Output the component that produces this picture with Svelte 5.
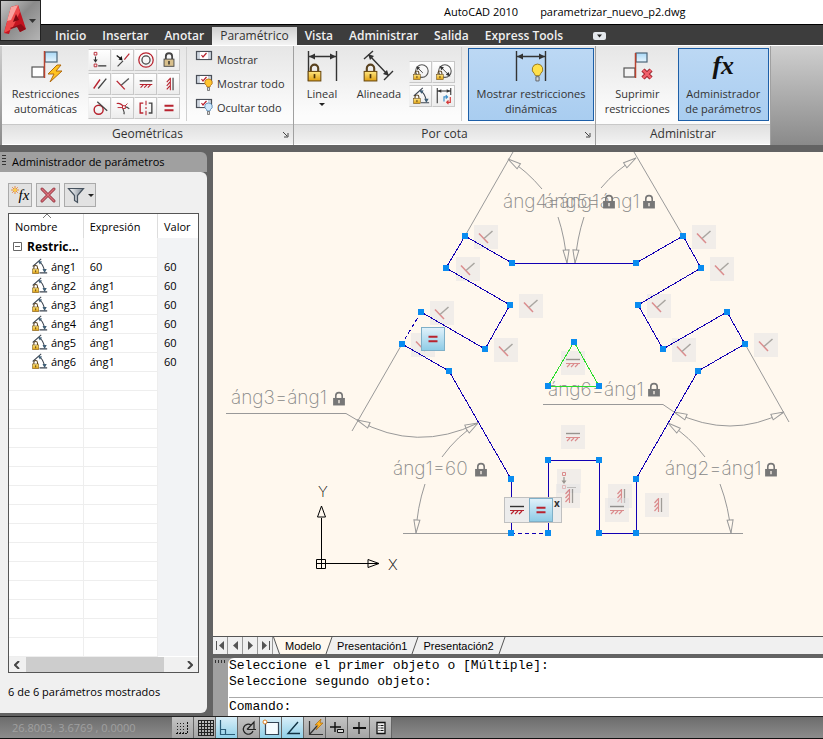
<script lang="ts">
  type Point = [number, number];

  const menu = ['Inicio', 'Insertar', 'Anotar', 'Paramétrico', 'Vista', 'Administrar', 'Salida', 'Express Tools'];
  let activeMenu = 'Paramétrico';

  const geometric = [
    { icon: 'coincident', label: 'Coincidente' },
    { icon: 'collinear', label: 'Colineal' },
    { icon: 'concentric', label: 'Concéntrico' },
    { icon: 'fix', label: 'Fijo' },
    { icon: 'parallel', label: 'Paralelo' },
    { icon: 'perpendicular', label: 'Perpendicular' },
    { icon: 'horizontal', label: 'Horizontal' },
    { icon: 'vertical', label: 'Vertical' },
    { icon: 'tangent', label: 'Tangente' },
    { icon: 'smooth', label: 'Suave' },
    { icon: 'symmetric', label: 'Simetría' },
    { icon: 'equal', label: 'Igual' },
  ];

  const showOptions = [
    { icon: 'show', label: 'Mostrar' },
    { icon: 'show-all', label: 'Mostrar todo' },
    { icon: 'hide-all', label: 'Ocultar todo' },
  ];

  const dimensional = [
    { icon: 'radial', label: 'Radio' },
    { icon: 'diametral', label: 'Diámetro' },
    { icon: 'angular', label: 'Angular' },
    { icon: 'convert', label: 'Convertir' },
  ];

  const params = [
    { name: 'áng1', expression: '60', value: 60 },
    { name: 'áng2', expression: 'áng1', value: 60 },
    { name: 'áng3', expression: 'áng1', value: 60 },
    { name: 'áng4', expression: 'áng1', value: 60 },
    { name: 'áng5', expression: 'áng1', value: 60 },
    { name: 'áng6', expression: 'áng1', value: 60 },
  ];
  const emptyRows = Array(15);

  const statusButtons = [
    { icon: 'snap', label: 'Forzcursor', on: false },
    { icon: 'grid', label: 'Rejilla', on: false },
    { icon: 'ortho', label: 'Orto', on: true },
    { icon: 'polar', label: 'Polar', on: false },
    { icon: 'osnap', label: 'Refent', on: true },
    { icon: 'otrack', label: 'Rastreo', on: true },
    { icon: 'ducs', label: 'SCPD', on: false },
    { icon: 'dyn', label: 'Din', on: false },
    { icon: 'lineweight', label: 'Grosor', on: false },
    { icon: 'quickprops', label: 'Propiedades', on: false },
  ];

  // polyline vertices, clockwise from the bottom left of the slot
  const grips: Point[] = [
    [548, 533], [548, 460], [599, 460], [599, 533], [636, 533], [636, 479],
    [698, 371], [745, 344], [727, 312], [663, 349], [638, 305], [701, 268],
    [683, 236], [636, 263], [512, 263], [465, 236], [446, 268], [510, 305],
    [485, 349], [421, 312], [402, 344], [449, 371], [511, 479], [511, 533],
  ];
  const triangle: Point[] = [[574, 342], [548, 386], [599, 386]];

  const toPoints = (pts: Point[]) => pts.map((p) => p.join(',')).join(' ');

  const badges = [
    { icon: 'perpendicular', x: 486, y: 237 },
    { icon: 'perpendicular', x: 468, y: 269 },
    { icon: 'perpendicular', x: 531, y: 306 },
    { icon: 'perpendicular', x: 442, y: 313 },
    { icon: 'perpendicular', x: 423, y: 345 },
    { icon: 'perpendicular', x: 506, y: 350 },
    { icon: 'perpendicular', x: 704, y: 237 },
    { icon: 'perpendicular', x: 722, y: 269 },
    { icon: 'perpendicular', x: 659, y: 306 },
    { icon: 'perpendicular', x: 684, y: 350 },
    { icon: 'perpendicular', x: 766, y: 345 },
    { icon: 'horizontal', x: 573, y: 363 },
    { icon: 'horizontal', x: 573, y: 437 },
    { icon: 'coincident', x: 569, y: 481 },
    { icon: 'vertical', x: 568, y: 496 },
    { icon: 'vertical', x: 620, y: 496 },
    { icon: 'horizontal', x: 617, y: 510 },
    { icon: 'vertical', x: 657, y: 505 },
  ];

  // angle is the direction the tip points to, 0 = right
  const arrows = [
    { x: 508, y: 159, angle: -146 },
    { x: 567, y: 263, angle: 86 },
    { x: 575, y: 263, angle: 94 },
    { x: 636, y: 158, angle: -34 },
    { x: 357, y: 420, angle: -156 },
    { x: 478, y: 423, angle: -22 },
    { x: 478, y: 423, angle: -36 },
    { x: 416, y: 533, angle: 94 },
    { x: 668, y: 423, angle: -144 },
    { x: 674, y: 412, angle: -157 },
    { x: 784, y: 412, angle: -23 },
    { x: 731, y: 533, angle: 86 },
  ];

  const dimensions = [
    { text: 'áng4=áng1', x: 503, y: 208 },
    { text: 'áng5=áng1', x: 544, y: 208 },
    { text: 'áng3=áng1', x: 231, y: 404 },
    { text: 'áng6=áng1', x: 548, y: 396 },
    { text: 'áng1=60', x: 393, y: 475 },
    { text: 'áng2=áng1', x: 665, y: 475 },
  ];
  const locks: Point[] = [[602, 194], [642, 194], [332, 391], [647, 382], [474, 462], [764, 462]];
</script>

<svg class="defs" aria-hidden="true">
  <defs>
    <linearGradient id="gold" x1="0" y1="0" x2="0" y2="1">
      <stop offset="0" stop-color="#ffe680" />
      <stop offset="1" stop-color="#e0a010" />
    </linearGradient>
    <linearGradient id="sky" x1="0" y1="0" x2="0" y2="1">
      <stop offset="0" stop-color="#a8d8f6" />
      <stop offset="1" stop-color="#e8f6ff" />
    </linearGradient>
    <linearGradient id="funnel-fill">
      <stop offset="0" stop-color="#fff" />
      <stop offset="1" stop-color="#7d8894" />
    </linearGradient>
  </defs>

  <symbol id="coincident" viewBox="0 0 20 20">
    <g fill="none">
      <path d="M3.500 1.500h3v3h-3z M3.500 14.500h3v3h-3z" stroke="#b8232f" />
      <path d="M5 6v5 M8 16.500h9" stroke="#333" stroke-width="1.200" />
    </g>
    <path d="M2.500 9.500h5L5 13z" fill="#333" />
  </symbol>
  <symbol id="collinear" viewBox="0 0 20 20">
    <path d="M4 17L10 11" stroke="#444" stroke-width="1.300" />
    <path d="M11.500 9.500L17 3" stroke="#b8232f" stroke-width="1.300" />
    <path d="M3 5l5 4" stroke="#111" stroke-width="1.400" />
    <path d="M9.500 10.500l-4.500-1 3.500-4z" fill="#111" />
  </symbol>
  <symbol id="concentric" viewBox="0 0 20 20">
    <circle cx="10" cy="10" r="8" fill="none" stroke="#b8232f" stroke-width="1.400" />
    <circle cx="10" cy="10" r="4.500" fill="none" stroke="#444" stroke-width="1.400" />
  </symbol>
  <symbol id="fix" viewBox="0 0 20 20">
    <path d="M6.500 9V6a3.500 3.500 0 0 1 7 0v3" fill="none" stroke="#444" stroke-width="2" />
    <rect x="4.500" y="9" width="11" height="8" fill="#d9c08c" stroke="#444" />
    <path d="M10 11v4" stroke="#222" stroke-width="1.500" />
  </symbol>
  <symbol id="parallel" viewBox="0 0 20 20">
    <path d="M3 15L10 5" stroke="#b8232f" stroke-width="1.500" />
    <path d="M8 15L17 4" stroke="#444" stroke-width="1.500" />
  </symbol>
  <symbol id="perpendicular" viewBox="0 0 20 20">
    <path d="M3 6.500L12 16" stroke="#b8232f" stroke-width="1.500" />
    <path d="M8 11.500L16.500 4" stroke="#555" stroke-width="1.500" />
  </symbol>
  <symbol id="horizontal" viewBox="0 0 20 20">
    <path d="M3 6.500h14" stroke="#333" stroke-width="1.400" />
    <path d="M3 10.500h14 M7 11l-3 3 M11 11l-3 3 M15 11l-3 3" fill="none" stroke="#b8232f" stroke-width="1.200" />
  </symbol>
  <symbol id="vertical" viewBox="0 0 20 20">
    <path d="M14.500 3v14" stroke="#444" stroke-width="1.300" />
    <path d="M11.500 3v14 M11 4l-3.500 4 M11 8l-3.500 4 M11 12l-3.500 4" fill="none" stroke="#b8232f" stroke-width="1.200" />
  </symbol>
  <symbol id="tangent" viewBox="0 0 20 20">
    <circle cx="8.500" cy="12" r="5" fill="none" stroke="#b8232f" stroke-width="1.600" />
    <path d="M7 3l11 10" stroke="#444" stroke-width="1.400" />
  </symbol>
  <symbol id="smooth" viewBox="0 0 20 20">
    <path d="M3 5c4-1 6 1 8 4" fill="none" stroke="#b8232f" stroke-width="1.300" />
    <path d="M11 9c3-1 5 1 6 2 M10 11c1 3 2 4 1 6" fill="none" stroke="#444" stroke-width="1.300" />
    <path d="M4 9.500h6 M12 8l3-3" stroke="#b8232f" />
    <rect x="9.500" y="7.500" width="3" height="3" fill="#fff" stroke="#b8232f" />
  </symbol>
  <symbol id="symmetric" viewBox="0 0 20 20">
    <path d="M7 4.500H3.500v11H7" fill="none" stroke="#b8232f" stroke-width="1.500" />
    <path d="M13 4.500h3.500v11H13" fill="none" stroke="#444" stroke-width="1.500" />
    <path d="M10 2v5 M10 9v2 M10 13v5" stroke="#b8232f" stroke-width="1.200" />
  </symbol>
  <symbol id="equal" viewBox="0 0 20 20">
    <path d="M5 7.500h10 M5 12.500h10" stroke="#b8232f" stroke-width="2.400" />
  </symbol>

  <symbol id="bulb" viewBox="0 0 12 18">
    <path d="M6 1a5 5 0 0 0-3 9l1 2h4l1-2a5 5 0 0 0-3-9z" fill="#ffe04a" stroke="#8a6a14" stroke-width="0.800" />
    <path d="M4.500 13h3v4h-3z" fill="#d0d6dc" stroke="#555" stroke-width="0.800" />
  </symbol>
  <symbol id="show" viewBox="0 0 18 18">
    <rect x="1.500" y="1.500" width="15" height="8" fill="#cfd6e0" stroke="#4a4f58" stroke-width="1.200" />
    <rect x="5" y="2" width="8" height="7" fill="#fff" />
    <path d="M6.500 5l1.500 2 3.500-4" fill="none" stroke="#b8232f" stroke-width="1.200" />
  </symbol>
  <symbol id="show-all" viewBox="0 0 18 18">
    <use href="#show" width="18" height="18" />
    <path d="M13.500 5a3.500 3.500 0 0 0-2 6.500l.5 1.500h3l.5-1.500a3.500 3.500 0 0 0-2-6.500z" fill="#ffc52e" stroke="#b06a10" stroke-width=".8" />
    <path d="M12.500 13.500h2v3h-2z" fill="#ddd" stroke="#555" stroke-width=".7" />
  </symbol>
  <symbol id="hide-all" viewBox="0 0 18 18">
    <use href="#show" width="18" height="18" />
    <path d="M13.500 5a3.500 3.500 0 0 0-2 6.500l.5 1.500h3l.5-1.500a3.500 3.500 0 0 0-2-6.500z" fill="#cfe8fb" stroke="#4a7fae" stroke-width=".8" />
    <path d="M12.500 13.500h2v3h-2z" fill="#ddd" stroke="#555" stroke-width=".7" />
  </symbol>

  <symbol id="gold-lock" viewBox="0 0 14 18">
    <path d="M3.500 8V5a3.500 3.500 0 0 1 7 0v3" fill="none" stroke="#5a4320" stroke-width="2" />
    <rect x="1" y="8" width="12" height="9" fill="url(#gold)" stroke="#6b4a10" />
    <path d="M7 10.500v4" stroke="#4a3208" stroke-width="1.600" />
  </symbol>
  <symbol id="auto" viewBox="0 0 32 32">
    <rect x="15" y="2" width="12" height="10" fill="url(#sky)" stroke="#4a6478" stroke-width="1.200" />
    <rect x="2" y="17" width="12" height="10" fill="#fff" stroke="#555" stroke-width="1.200" />
    <path d="M14.500 1v27" stroke="#b8422f" stroke-width="1.500" />
    <path d="M27 15l-9 9h6l-4 8 12-11h-6l5-6z" fill="#ffc21f" stroke="#b06a10" />
  </symbol>
  <symbol id="remove" viewBox="0 0 32 32">
    <rect x="15" y="3" width="11" height="9" fill="url(#sky)" stroke="#4a6478" stroke-width="1.200" />
    <rect x="3" y="18" width="11" height="9" fill="#f4f4f4" stroke="#555" stroke-width="1.200" />
    <path d="M14.500 3v25" stroke="#b8422f" stroke-width="1.500" />
    <path d="M22 20l8 8 M30 20l-8 8" stroke="#8f1722" stroke-width="4.500" />
    <path d="M22 20l8 8 M30 20l-8 8" stroke="#f0606a" stroke-width="2.500" />
  </symbol>
  <symbol id="linear" viewBox="0 0 32 32">
    <path d="M2.500 1v30 M30.500 1v30 M3 6.500h27" stroke="#333" stroke-width="1.400" />
    <path d="M3 6.500l6-3v6z M30 6.500l-6-3v6z" fill="#333" />
    <use href="#gold-lock" x="1" y="13" width="15" height="19" />
  </symbol>
  <symbol id="aligned" viewBox="0 0 32 32">
    <path d="M1 9l9-8 M21 30l9-9 M6 5l19 20" stroke="#333" stroke-width="1.400" />
    <path d="M5 4l6 2-4 4z M26 26l-2-6-4 4z" fill="#333" />
    <use href="#gold-lock" x="0" y="13" width="15" height="19" />
  </symbol>
  <symbol id="dynamic" viewBox="0 0 32 32">
    <path d="M1.500 1v30 M30.500 1v30 M2 6.500h28" stroke="#333" stroke-width="1.400" />
    <path d="M2 6.500l6-3v6z M30 6.500l-6-3v6z" fill="#333" />
    <use href="#bulb" x="16" y="13" width="13" height="19" />
  </symbol>
  <symbol id="radial" viewBox="0 0 20 20">
    <circle cx="11" cy="9" r="7" fill="none" stroke="#555" stroke-width="1.200" />
    <path d="M6 5l6 6" stroke="#333" /><path d="M5 4l4 1-3 3z" fill="#333" />
    <use href="#gold-lock" x="1" y="8" width="9" height="11" />
  </symbol>
  <symbol id="diametral" viewBox="0 0 20 20">
    <circle cx="11" cy="9" r="7" fill="none" stroke="#555" stroke-width="1.200" />
    <path d="M6 4l10 10" stroke="#333" /><path d="M5 3l5 2-3 3z M17 15l-2-5-3 3z" fill="#333" />
    <use href="#gold-lock" x="1" y="8" width="9" height="11" />
  </symbol>
  <symbol id="angular" viewBox="0 0 20 20">
    <path d="M2 10L12 1 M10 17.500h9 M9 4c4 2 6 6 7 12" fill="none" stroke="#3c4450" stroke-width="1.200" />
    <path d="M8 3.500l5 .5-2.500 3.500z M16 17.500l-2.500-4.500h5z" fill="#3f5f77" />
    <use href="#gold-lock" x="1" y="8" width="9" height="11" />
  </symbol>
  <symbol id="convert" viewBox="0 0 20 20">
    <path d="M2.500 1v17 M17.500 1v8 M3 4.500h14" stroke="#333" stroke-width="1.200" />
    <path d="M3 4.500l4-2v4z M17 4.500l-4-2v4z" fill="#333" />
    <path d="M10 16v-5h4 M12 9l2 2-2 2" fill="none" stroke="#3d8fc9" stroke-width="1.300" />
    <path d="M17 11v6h-3 M15 15l-2 2 2 2" fill="none" stroke="#d43a3a" stroke-width="1.300" />
  </symbol>

  <symbol id="cross" viewBox="0 0 20 20">
    <path d="M4 4l12 12 M16 4L4 16" stroke="#8d2c38" stroke-width="3" stroke-linecap="round" />
    <path d="M4 4l12 12 M16 4L4 16" stroke="#d8707a" stroke-width="1.600" stroke-linecap="round" />
  </symbol>
  <symbol id="funnel" viewBox="0 0 20 20">
    <path d="M2.500 3.500h15l-6 7v7l-3-2v-5z" fill="url(#funnel-fill)" stroke="#46525e" stroke-width="1.200" />
  </symbol>

  <symbol id="grey-lock" viewBox="0 0 12 14">
    <path d="M3 7V4.500a3 3 0 0 1 6 0V7" fill="none" stroke="#777" stroke-width="1.500" />
    <rect x="0.500" y="6.500" width="11" height="7" fill="#777" />
    <path d="M6 8.500v3" stroke="#fff8ee" stroke-width="1.200" />
  </symbol>

  <symbol id="snap" viewBox="0 0 20 20">
    <path d="M4.500 5v11 M7.500 5v11 M10.500 5v11" stroke="#222" stroke-dasharray="1 2" />
    <path d="M14.500 4v12 M3 15.500h12" stroke="#111" stroke-dasharray="2 1" />
  </symbol>
  <symbol id="grid" viewBox="0 0 20 20">
    <path d="M3.500 2v16 M6.500 2v16 M9.500 2v16 M12.500 2v16 M15.500 2v16 M18.500 2v16 M3 2.500h16 M3 5.500h16 M3 8.500h16 M3 11.500h16 M3 14.500h16 M3 17.500h16" stroke="#222" />
  </symbol>
  <symbol id="ortho" viewBox="0 0 20 20">
    <path d="M3.500 2v14.500H18 M3.500 11.500h5v5" fill="none" stroke="#2a5d78" stroke-width="1.200" />
  </symbol>
  <symbol id="polar" viewBox="0 0 20 20">
    <path d="M12 7A5 5 0 1 0 14 13 M8 11.500h9 M8 11.500L15 4v7" fill="none" stroke="#222" stroke-width="1.200" />
  </symbol>
  <symbol id="osnap" viewBox="0 0 20 20">
    <path d="M4.500 4.500h13v12h-13z" fill="#f4fbff" stroke="#345" stroke-width="1.200" />
    <circle cx="4" cy="4" r="2" fill="#fff" stroke="#e08020" />
  </symbol>
  <symbol id="otrack" viewBox="0 0 20 20">
    <path d="M15 4L5 15.500h12" fill="none" stroke="#134" stroke-width="1.400" />
  </symbol>
  <symbol id="ducs" viewBox="0 0 20 20">
    <path d="M4.500 3v13.500H18 M4.500 16.500L12 8" fill="none" stroke="#333" stroke-width="1.200" />
    <path d="M16 1l-6 6h3l-2 5 7-7h-3z" fill="#ffb31f" stroke="#a86810" stroke-width=".7" />
  </symbol>
  <symbol id="dyn" viewBox="0 0 20 20">
    <path d="M8 4v10 M3 9h11" stroke="#111" stroke-width="1.400" />
    <path d="M10.500 11.500h6v3h-6z" fill="#ddd" stroke="#111" />
  </symbol>
  <symbol id="lineweight" viewBox="0 0 20 20">
    <path d="M10 4v12" stroke="#111" stroke-width="1.300" />
    <path d="M4 10h13" stroke="#111" stroke-width="2" />
  </symbol>
  <symbol id="quickprops" viewBox="0 0 20 20">
    <path d="M6 4.500h8v11H6z" fill="#eee" stroke="#111" stroke-width="1.300" />
    <path d="M7.500 7.500h5 M7.500 10h5 M7.500 12.500h5" stroke="#111" stroke-dasharray="1 1 3" />
  </symbol>
</svg>

<div class="app">
  <header class="titlebar">
    <button class="app-button" aria-label="Menú de la aplicación">
      <svg width="36" height="36" viewBox="0 0 36 36">
        <path d="M3 30L10 4l7-2 8 24-6 3-3-6-6 2-2 6z" fill="#c3131f" />
        <path d="M10 4l7-2 2 7-8 17-8 4z" fill="#ef4a4a" />
        <path d="M10 4l7-2-7 15-4 1z" fill="#f8a4a0" />
        <path d="M12 19l3-8 3 6z" fill="#7d0a12" />
        <path d="M9 25l11-4 5 5-6 3-3-5-6 2z" fill="#8f0c16" />
        <path d="M28 16h7l-3.500 4z" fill="#333" />
      </svg>
    </button>
    <span>AutoCAD 2010</span>
    <span>parametrizar_nuevo_p2.dwg</span>
  </header>

  <nav class="menu">
    {#each menu as item}
      <button class:active={item === activeMenu} on:click={() => (activeMenu = item)}>{item}</button>
    {/each}
    <button class="minimize" aria-label="Minimizar cinta">
      <svg width="13" height="8" viewBox="0 0 13 8">
        <rect width="13" height="8" rx="2" fill="#e4e8ec" />
        <path d="M4 2.500h5L6.500 5.500z" fill="#222" />
      </svg>
    </button>
  </nav>

  <section class="ribbon">
    <div class="panel">
      <div class="tools">
        <button class="big auto">
          <svg width="32" height="32"><use href="#auto" /></svg>
          <span>Restricciones<br />automáticas</span>
        </button>
        <div class="icon-grid">
          {#each geometric as tool}
            <button aria-label={tool.label}><svg width="18" height="18"><use href="#{tool.icon}" /></svg></button>
          {/each}
        </div>
        <div class="options">
          {#each showOptions as option}
            <button><svg width="18" height="18"><use href="#{option.icon}" /></svg>{option.label}</button>
          {/each}
        </div>
      </div>
      <footer>Geométricas<svg class="launcher" width="6" height="6" viewBox="0 0 6 6"><path d="M0 0l4 4 M5 1v4H1" /></svg></footer>
    </div>

    <div class="panel cota">
      <div class="tools">
        <button class="big lineal">
          <svg width="32" height="32"><use href="#linear" /></svg>
          <span>Lineal</span>
          <i class="caret"></i>
        </button>
        <button class="big alineada">
          <svg width="32" height="32"><use href="#aligned" /></svg>
          <span>Alineada</span>
        </button>
        <div class="icon-grid two">
          {#each dimensional as tool}
            <button aria-label={tool.label}><svg width="18" height="18"><use href="#{tool.icon}" /></svg></button>
          {/each}
        </div>
        <div class="divider"></div>
        <button class="big pressed dynamic">
          <svg width="32" height="32"><use href="#dynamic" /></svg>
          <span>Mostrar restricciones<br />dinámicas</span>
        </button>
      </div>
      <footer>Por cota<svg class="launcher" width="6" height="6" viewBox="0 0 6 6"><path d="M0 0l4 4 M5 1v4H1" /></svg></footer>
    </div>

    <div class="panel manage">
      <div class="tools">
        <button class="big suprimir">
          <svg width="32" height="32"><use href="#remove" /></svg>
          <span>Suprimir<br />restricciones</span>
        </button>
        <button class="big pressed">
          <b class="fx">fx</b>
          <span>Administrador<br />de parámetros</span>
        </button>
      </div>
      <footer>Administrar</footer>
    </div>
  </section>

  <main>
    <aside>
      <h2>Administrador de parámetros</h2>
      <div class="palette">
        <div class="palette-tools">
          <button aria-label="Nuevo parámetro" class="new-param">
            <svg width="8" height="8" viewBox="0 0 10 10">
              <path d="M5 0v10 M0 5h10 M1.500 1.500l7 7 M8.500 1.500l-7 7" stroke="#e8761a" />
              <circle cx="5" cy="5" r="2" fill="#ffd23a" />
            </svg>
            <b>fx</b>
          </button>
          <button aria-label="Suprimir"><svg width="20" height="20"><use href="#cross" /></svg></button>
          <button aria-label="Filtro" class="filter">
            <svg width="20" height="20"><use href="#funnel" /></svg>
            <i class="caret"></i>
          </button>
        </div>

        <div class="list">
          <table>
            <thead>
              <tr><th>Nombre<svg class="sort" width="8" height="4" viewBox="0 0 8 4"><path d="M0 4l4-4 4 4" /></svg></th><th>Expresión</th><th>Valor</th></tr>
            </thead>
            <tbody>
              <tr class="group">
                <td><svg width="9" height="9" viewBox="0 0 9 9"><path d="M.5.5h8v8h-8z M2 4.500h5" /></svg>Restric...</td>
                <td></td>
                <td></td>
              </tr>
              {#each params as param}
                <tr class="param">
                  <td><svg width="17" height="17"><use href="#angular" /></svg>{param.name}</td>
                  <td>{param.expression}</td>
                  <td>{param.value}</td>
                </tr>
              {/each}
              {#each emptyRows as _}
                <tr><td></td><td></td><td></td></tr>
              {/each}
            </tbody>
          </table>
          <div class="scroll">
            <svg width="6" height="8" viewBox="0 0 6 8"><path d="M5 0L1 4l4 4" /></svg>
            <div class="thumb"></div>
            <svg width="6" height="8" viewBox="0 0 6 8"><path d="M1 0l4 4-4 4" /></svg>
          </div>
        </div>
        <p>6 de 6 parámetros mostrados</p>
      </div>
    </aside>

    <div class="work">
      <div class="canvas">
        <svg class="drawing" width="610" height="484" viewBox="213 152 610 484">
          {#each badges as badge}
            <g opacity="0.500">
              <rect x={badge.x - 12} y={badge.y - 12} width="24" height="24" fill="#e4e4e6" />
              <use href="#{badge.icon}" x={badge.x - 10} y={badge.y - 10} width="20" height="20" />
            </g>
          {/each}

          <g class="dim">
            <path d="M465 236L513 152 M683 236L634 152 M402 344L352 431 M745 344L789 422" />
            <path d="M403 533.500h108 M636 533.500h107" />
            <path d="M508 159Q527 171 542 189 M558 217Q565 238 567 263" />
            <path d="M636 158Q616 170 601 188 M584 217Q577 238 575 263" />
            <path d="M226 413.500h120L357 420Q417 453 478 423" />
            <path d="M478 423Q457 436 442 457 M425 484Q417 508 416 533" />
            <path d="M543 404.500h120L674 412Q731 440 784 412" />
            <path d="M668 423Q690 437 705 457 M720 484Q729 508 731 533" />
            {#each arrows as arrow}
              <path class="arrow" d="M0 0L-13 -3v6z" transform="translate({arrow.x} {arrow.y}) rotate({arrow.angle})" />
            {/each}
          </g>
          {#each dimensions as dim}
            <text x={dim.x} y={dim.y}>{dim.text}</text>
          {/each}
          {#each locks as [x, y]}
            <use href="#grey-lock" {x} {y} width="14" height="15" />
          {/each}

          <polygon class="triangle" points={toPoints(triangle)} />
          <polyline class="shape" points={toPoints(grips.slice(0, 20))} />
          <polyline class="shape" points={toPoints(grips.slice(20))} />
          <path class="shape dashed" d="M421 312L402 344 M511 533h37" />
          {#each [...grips, ...triangle] as [x, y]}
            <rect {x} {y} class="grip" width="6" height="6" />
          {/each}

          <g class="ucs">
            <path d="M316.500 559.500h9v9h-9z M321.500 568v-50 M317 563.500h62" />
            <path d="M321.500 506l-4 11h8z M379 563.500l-11-4v8z" fill="#999" />
            <text x="318" y="497">Y</text>
            <text x="388" y="570">X</text>
          </g>
        </svg>

        <button class="constraint lone" aria-label="Igual"><svg width="18" height="18"><use href="#equal" /></svg></button>
        <div class="constraint-bar">
          <button class="flat" aria-label="Horizontal"><svg width="20" height="20"><use href="#horizontal" /></svg></button>
          <button class="constraint" aria-label="Igual"><svg width="18" height="18"><use href="#equal" /></svg></button>
          <button class="close" aria-label="Cerrar">x</button>
        </div>
      </div>

      <div class="layouts">
        <button aria-label="Primero"><svg width="9" height="9" viewBox="0 0 9 9"><path d="M0 0h1v9H0z M8 0v9L3 4.500z" /></svg></button>
        <button aria-label="Anterior"><svg width="9" height="9" viewBox="0 0 9 9"><path d="M7 0v9L2 4.500z" /></svg></button>
        <button aria-label="Siguiente"><svg width="9" height="9" viewBox="0 0 9 9"><path d="M2 0v9l5-4.500z" /></svg></button>
        <button aria-label="Último"><svg width="9" height="9" viewBox="0 0 9 9"><path d="M8 0h1v9H8z M1 0v9l5-4.500z" /></svg></button>
        <svg class="slash" width="8" height="17" viewBox="0 0 8 17"><path class="fill" d="M0 0h8v17z" /><path d="M.5 0l6 17" /></svg>
        <button class="tab current">Modelo</button>
        <svg class="slash" width="8" height="17" viewBox="0 0 8 17"><path class="fill" d="M0 0h7L1 17H0z" /><path d="M7 0L1 17" /></svg>
        <button class="tab">Presentación1</button>
        <svg class="slash" width="8" height="17" viewBox="0 0 8 17"><path d="M7 0L1 17" /></svg>
        <button class="tab">Presentación2</button>
        <svg class="slash" width="8" height="17" viewBox="0 0 8 17"><path d="M7 0L1 17" /></svg>
      </div>

      <div class="command">
        <div class="handle"></div>
        <div class="console">
          <p>Seleccione el primer objeto o [Múltiple]:</p>
          <p>Seleccione segundo objeto:</p>
          <label>Comando:<input type="text" /></label>
        </div>
      </div>
    </div>
  </main>

  <footer class="status">
    <span>26.8003, 3.6769 , 0.0000</span>
    {#each statusButtons as button}
      <button class:on={button.on} aria-label={button.label}><svg width="20" height="20"><use href="#{button.icon}" /></svg></button>
    {/each}
  </footer>
</div>

<style>
  :global(body) {
    margin: 0;
    background: #5f5f5f;
  }

  .app {
    display: flex;
    flex-direction: column;
    min-height: 100vh;
    font-family: 'Open Sans', 'Noto Sans', sans-serif;
    font-size: 11px;
    color: #333;
  }

  .app :is(button, input) {
    margin: 0;
    padding: 0;
    border: none;
    background: none;
    font: inherit;
    color: inherit;
  }

  .app svg {
    display: block;
    flex: none;
  }

  .defs {
    position: absolute;
    width: 0;
    height: 0;
  }

  .titlebar {
    position: relative;
    display: flex;
    gap: 22px;
    height: 24px;
    padding-left: 444px;
    background: #fff;
    border-bottom: 1px solid #000;
    line-height: 24px;
    color: #000;
    white-space: nowrap;
  }

  .titlebar .app-button {
    position: absolute;
    z-index: 2;
    top: 0;
    left: 0;
    width: 41px;
    height: 41px;
    border: 1px solid #222;
    background: linear-gradient(135deg, #c8c8c8, #8a8a8a 45%, #b4b4b4);
  }

  .menu {
    display: flex;
    align-items: flex-end;
    height: 20px;
    padding-left: 47px;
    background: #3d3d3d;
  }
  .app .menu button {
    height: 18px;
    padding: 0 8px;
    font-size: 12px;
    line-height: 18px;
    font-weight: 600;
    color: #f0f0f0;
    white-space: nowrap;
  }
  .app .menu button.active {
    background: linear-gradient(#d0d0d0, #f4f4f4);
    font-weight: 400;
    color: #333;
  }
  .app .menu .minimize {
    display: flex;
    align-items: center;
    margin-left: 14px;
  }

  .ribbon {
    display: flex;
    padding-left: 2px;
    border-top: 1px solid #fff;
    border-bottom: 7px solid #636363;
    background: linear-gradient(#cfcfcf, #8a8a8a);
  }

  .panel {
    display: flex;
    flex-direction: column;
    width: 292px;
    border-right: 1px solid #a0a0a0;
    box-sizing: border-box;
    background: linear-gradient(#e6e6e6, #fcfcfc 70%);
  }
  .panel.cota {
    width: 302px;
  }
  .panel.manage {
    width: 175px;
  }
  .panel > footer {
    position: relative;
    height: 19px;
    border-top: 1px solid #c8c8c8;
    border-bottom: 1px solid #fff;
    background: linear-gradient(#e0e0e0, #f2f2f2);
    font-size: 12px;
    line-height: 18px;
    text-align: center;
  }
  .app .launcher {
    position: absolute;
    right: 4px;
    bottom: 6px;
    fill: none;
    stroke: #444;
  }

  .tools {
    display: flex;
    align-items: flex-start;
    height: 76px;
    padding: 1px;
  }

  .big {
    display: flex;
    flex-direction: column;
    align-items: center;
    width: 90px;
    height: 74px;
    line-height: 16px;
    white-space: nowrap;
  }
  .big svg,
  .big .fx {
    margin: 3px 0 4px;
  }
  .big.pressed svg,
  .big.pressed .fx {
    margin-top: 1px;
  }
  .app .big.pressed {
    width: 92px;
    height: 73px;
    margin-top: 1px;
    box-sizing: border-box;
    border: 1px solid #1d5fa8;
    background: linear-gradient(#bcd8f4, #a9cdf0);
  }
  .app .big.dynamic {
    width: 126px;
  }
  .big.auto {
    width: 85px;
  }
  .big.lineal {
    width: 54px;
  }
  .big.alineada {
    width: 60px;
  }
  .big.suprimir {
    width: 81px;
  }
  .fx {
    height: 32px;
    line-height: 32px;
    font-family: 'Liberation Serif', serif;
    font-size: 26px;
    font-style: italic;
    color: #111;
  }

  .caret {
    border: 3px solid transparent;
    border-top-color: #222;
    border-bottom: none;
  }
  .lineal .caret {
    margin-top: 2px;
  }

  .icon-grid {
    display: grid;
    grid-template-columns: repeat(4, 23px);
    row-gap: 2px;
    padding-top: 2px;
  }
  .icon-grid.two {
    grid-template-columns: repeat(2, 23px);
    padding-top: 14px;
  }
  .app .icon-grid button {
    display: grid;
    place-items: center;
    height: 22px;
    border: 1px solid #c8c8c8;
    border-left-color: #f0f0f0;
    background: linear-gradient(#fff, #ececec);
    box-sizing: border-box;
  }

  .divider {
    width: 1px;
    height: 74px;
    margin: 0 6px;
    background: #d0d0d0;
  }

  .options {
    display: flex;
    flex-direction: column;
    height: 74px;
    margin-left: 6px;
    padding-left: 8px;
    border-left: 1px solid #d0d0d0;
  }
  .options button {
    display: flex;
    align-items: center;
    gap: 4px;
    height: 24px;
    white-space: nowrap;
  }

  main {
    display: flex;
    flex: 1;
    background: #636363;
  }

  aside {
    display: flex;
    flex-direction: column;
    width: 207px;
    margin-right: 6px;
    padding-bottom: 3px;
    color: #000;
  }
  h2 {
    position: relative;
    height: 20px;
    margin: 0;
    padding-left: 12px;
    border-radius: 0 6px 0 0;
    background: #a0a0a0;
    font-size: 11px;
    font-weight: 400;
    line-height: 20px;
    white-space: nowrap;
  }
  h2::before {
    content: '';
    position: absolute;
    left: 2px;
    top: 3px;
    width: 4px;
    height: 12px;
    background: repeating-linear-gradient(#333 0 1px, transparent 1px 3px);
  }

  .palette {
    display: flex;
    flex: 1;
    flex-direction: column;
    padding: 11px 8px 0;
    border-radius: 0 6px 6px 0;
    background: #f0f0f0;
  }
  .palette p {
    height: 40px;
    margin: 0;
    line-height: 38px;
    white-space: nowrap;
  }
  .palette-tools {
    display: flex;
    gap: 4px;
    margin-bottom: 6px;
  }
  .app .palette-tools button {
    display: flex;
    align-items: center;
    justify-content: center;
    width: 24px;
    height: 24px;
    border: 1px solid #aaa;
    background: #e2e2e2;
    box-sizing: border-box;
  }
  .app .palette-tools .filter {
    gap: 2px;
    width: 32px;
  }
  .new-param svg {
    align-self: flex-start;
    margin-top: 2px;
  }
  .new-param b {
    font-family: 'Liberation Serif', serif;
    font-size: 15px;
    font-style: italic;
    font-weight: 400;
    line-height: 20px;
  }

  .list {
    display: flex;
    flex: 1;
    flex-direction: column;
    border: 1px solid #555;
    background: #fff;
  }
  table {
    width: 100%;
    border-collapse: collapse;
    table-layout: fixed;
  }
  th {
    position: relative;
    height: 24px;
    padding: 0 6px;
    border-right: 1px solid #ddd;
    font-weight: 400;
    text-align: left;
  }
  th:last-child {
    width: 28px;
    border-right: none;
  }
  .app .sort {
    position: absolute;
    top: 0;
    left: 34px;
    fill: none;
    stroke: #777;
  }
  td {
    height: 19px;
    padding: 0 6px;
    border-right: 1px solid #eee;
    border-bottom: 1px solid #eee;
    box-sizing: border-box;
    line-height: 18px;
    white-space: nowrap;
  }
  td:last-child {
    border: none;
    background: #f2f3f5;
  }
  td svg {
    float: left;
  }
  .group td {
    padding: 0 4px;
    font-size: 12px;
    font-weight: 700;
  }
  .group svg {
    margin: 4px 5px 0 0;
    fill: none;
    stroke: #666;
  }
  .param td:first-child {
    padding: 0 0 0 22px;
  }
  .param svg {
    margin: 0 3px 0 0;
  }

  .scroll {
    display: flex;
    align-items: center;
    gap: 6px;
    height: 15px;
    margin-top: auto;
    padding: 0 5px;
    background: #f0f0f0;
  }
  .scroll svg {
    fill: none;
    stroke: #444;
    stroke-width: 2;
  }
  .thumb {
    width: 138px;
    height: 15px;
    margin-right: auto;
    background: #cdcdcd;
  }

  .work {
    display: flex;
    flex: 1;
    flex-direction: column;
    min-width: 0;
  }

  .canvas {
    position: relative;
    flex: 1;
    overflow: hidden;
    background: #fff8ee;
  }
  .drawing {
    font-family: Inter, 'Open Sans', sans-serif;
    font-size: 19px;
    font-weight: 200;
  }
  .drawing text {
    fill: #888;
  }
  .dim path {
    fill: none;
    stroke: #999;
  }
  .dim .arrow {
    fill: #fff8ee;
  }
  .shape {
    fill: none;
    stroke: #1200b4;
    shape-rendering: crispEdges;
  }
  .dashed {
    stroke-dasharray: 4 3;
  }
  .triangle {
    fill: none;
    stroke: #2bdc2b;
    shape-rendering: crispEdges;
  }
  .grip {
    fill: #0a8cf0;
    transform: translate(-3px, -3px);
  }
  .ucs path {
    stroke: #000;
    fill: none;
  }
  .ucs text {
    font-size: 15px;
    fill: #000;
  }

  .app .constraint {
    display: grid;
    place-items: center;
    width: 24px;
    height: 24px;
    border: 1px solid #7fb0c8;
    background: linear-gradient(#e0f1fa, #8fcce6);
    box-sizing: border-box;
  }
  .app .lone {
    position: absolute;
    left: 208px;
    top: 175px;
  }
  .constraint-bar {
    position: absolute;
    left: 291px;
    top: 345px;
    display: flex;
    border: 1px solid #c0c0c0;
    background: #ececec;
  }
  .constraint-bar .flat {
    display: grid;
    place-items: center;
    width: 24px;
  }
  .app .constraint-bar .close {
    align-self: flex-start;
    width: 8px;
    font-size: 10px;
    font-weight: 700;
    line-height: 11px;
  }

  .layouts {
    display: flex;
    height: 17px;
    border-top: 1px solid #555;
    border-bottom: 4px solid #636363;
    background: #f0f0f0;
    font-family: 'Liberation Sans', Arial, sans-serif;
    color: #000;
  }
  .app .layouts button:not(.tab) {
    display: grid;
    place-items: center;
    width: 15px;
    border-right: 1px solid #999;
    box-sizing: border-box;
    fill: #555;
  }
  .app .layouts .tab {
    padding: 0 4px;
  }
  .app .layouts .current {
    background: #fff8ee;
  }
  .slash {
    fill: none;
    stroke: #555;
  }
  .slash .fill {
    fill: #fff8ee;
    stroke: none;
  }

  .command {
    display: flex;
    background: #a0a0a0;
    font-family: 'Liberation Mono', monospace;
    font-size: 13px;
    color: #000;
  }
  .handle {
    width: 11px;
    height: 3px;
    margin: 2px 2px 0;
    background: repeating-linear-gradient(90deg, #333 0 1px, transparent 1px 3px);
  }
  .console {
    flex: 1;
    padding-left: 1px;
    border-radius: 6px 0 0 0;
    background: #fff;
  }
  .console p {
    margin: 0;
    line-height: 16px;
  }
  .console label {
    display: flex;
    margin-top: 7px;
    border-top: 1px solid #aaa;
    line-height: 18px;
  }
  .console input {
    flex: 1;
    outline: none;
  }

  .status {
    display: flex;
    height: 21px;
    border-top: 1px solid #222;
    border-bottom: 1px solid #111;
    background: linear-gradient(#6c6c6c, #8c8c8c);
  }
  .status span {
    width: 160px;
    padding-left: 12px;
    line-height: 22px;
    color: #a0a0a0;
    white-space: nowrap;
  }
  .app .status button {
    display: grid;
    place-items: center;
    width: 22px;
    border-right: 1px solid #666;
    background: linear-gradient(#c4c4c4, #a4a4a4);
    box-sizing: border-box;
  }
  .app .status .on {
    background: linear-gradient(#d8eef8, #90d0e8);
  }
</style>
